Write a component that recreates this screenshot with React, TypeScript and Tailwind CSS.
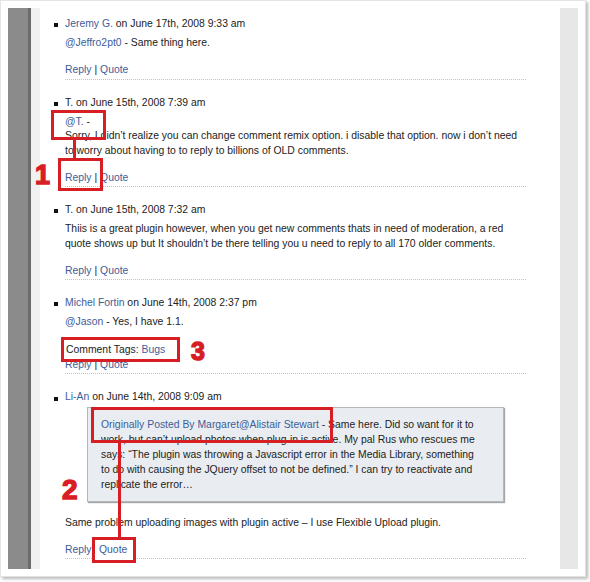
import React from "react";

const LINK = "text-[#3d5d99]";

function Bullet() {
  return <span className="block w-[4px] h-[4px] bg-[#111] mt-[2px] shrink-0" />;
}

function Header({ author, link, date }: { author: string; link?: boolean; date: string }) {
  return (
    <div className="flex items-center -ml-[11px] gap-[7px] whitespace-nowrap">
      <Bullet />
      <span>
        {link ? <span className={LINK}>{author}</span> : author} on {date}
      </span>
    </div>
  );
}

function ReplyRow({ className = "" }: { className?: string }) {
  return (
    <div className={"border-b border-dotted border-[#c2c2c2] pb-[1px] whitespace-nowrap " + className}>
      <span className={LINK}>Reply</span> | <span className={LINK}>Quote</span>
    </div>
  );
}

function RedBox({ className }: { className: string }) {
  return <div className={"absolute border-[3px] border-[#d81e25] " + className} />;
}

export default function App() {
  return (
    <div className="relative w-[590px] h-[582px] bg-white overflow-hidden font-['Liberation_Sans',Arial,sans-serif] text-[10.4px] leading-[14.5px] text-[#222]">
      <div className="w-[586px] h-[577px] bg-white border border-[#e4e4e4] p-[7px] shadow-[2px_2px_3px_rgba(0,0,0,0.28)]">
        <div className="flex h-full">
          <div className="w-[20px] bg-[#8b8b8b]" />
          <div className="w-[3px] bg-[#6c6c6c]" />
          <div className="w-[9px] bg-[#f1f1f1]" />
          <div className="flex-1 pl-[25px] pr-[34px] pt-[9px]">
            <ul>
              <li>
                <Header author="Jeremy G." link date="June 17th, 2008 9:33 am" />
                <div className="mt-[4.5px] whitespace-nowrap">
                  <span className={LINK}>@Jeffro2pt0</span> - Same thing here.
                </div>
                <ReplyRow className="mt-[12.5px]" />
              </li>
              <li className="mt-[16px]">
                <Header author="T." date="June 15th, 2008 7:39 am" />
                <div className="mt-[4.5px] whitespace-nowrap">
                  <span className={LINK}>@T.</span> -<br />
                  Sorry, I didn’t realize you can change comment remix option. i disable that option. now i don’t need
                  <br />
                  to worry about having to to reply to billions of OLD comments.
                </div>
                <ReplyRow className="mt-[12.5px]" />
              </li>
              <li className="mt-[16px]">
                <Header author="T." date="June 15th, 2008 7:32 am" />
                <div className="mt-[4.5px] whitespace-nowrap">
                  Thiis is a great plugin however, when you get new comments thats in need of moderation, a red
                  <br />
                  quote shows up but It shouldn’t be there telling you u need to reply to all 170 older comments.
                </div>
                <ReplyRow className="mt-[12.5px]" />
              </li>
              <li className="mt-[16px]">
                <Header author="Michel Fortin" link date="June 14th, 2008 2:37 pm" />
                <div className="mt-[4.5px] whitespace-nowrap">
                  <span className={LINK}>@Jason</span> - Yes, I have 1.1.
                </div>
                <ReplyRow className="mt-[28.25px]" />
              </li>
              <li className="mt-[16px]">
                <Header author="Li-An" link date="June 14th, 2008 9:09 am" />
                <div className="mt-[2.25px] mx-[22px] border border-[#b4b8bd] bg-[#e9edf1] pl-[13px] pt-[8.75px] pb-[9px] leading-[15px] whitespace-nowrap shadow-[1px_1px_1px_rgba(0,0,0,0.35)]">
                  <span className={LINK}>Originally Posted By Margaret@Alistair Stewart</span> - Same here. Did so want for it to
                  <br />
                  work, but can’t upload photos when plug-in is active. My pal Rus who rescues me
                  <br />
                  says: “The plugin was throwing a Javascript error in the Media Library, something
                  <br />
                  to do with causing the JQuery offset to not be defined.” I can try to reactivate and
                  <br />
                  replicate the error…
                </div>
                <div className="mt-[13.75px] whitespace-nowrap">
                  Same problem uploading images with plugin active – I use Flexible Upload plugin.
                </div>
                <ReplyRow className="mt-[12.5px]" />
              </li>
            </ul>
          </div>
          <div className="w-[18px] bg-[#e7e7e7]" />
        </div>
      </div>

      {/* Annotation 1 */}
      <RedBox className="left-[51px] top-[110px] w-[55px] h-[30px]" />
      <div className="absolute left-[73px] top-[140px] w-[3px] h-[18px] bg-[#d81e25]" />
      <RedBox className="left-[58px] top-[158px] w-[45px] h-[33px]" />
      <div className="absolute left-[35px] top-[162px] text-[27px] leading-[27px] font-bold text-[#d81e25] [-webkit-text-stroke:1.4px_#d81e25]">1</div>

      {/* Annotation 3 */}
      <div className="absolute left-[61px] top-[337px] w-[119px] h-[25px] border-[3px] border-[#d81e25] bg-white pl-[2px] leading-[19px] whitespace-nowrap">
        Comment Tags: <span className={LINK}>Bugs</span>
      </div>
      <div className="absolute left-[191px] top-[339px] text-[25px] leading-[25px] font-bold text-[#d81e25] [-webkit-text-stroke:1.4px_#d81e25]">3</div>

      {/* Annotation 2 */}
      <RedBox className="left-[91px] top-[407px] w-[242px] h-[36px]" />
      <div className="absolute left-[118px] top-[443px] w-[3px] h-[94px] bg-[#d81e25]" />
      <div className="absolute left-[92px] top-[537px] w-[44px] h-[26px] border-[3px] border-[#d81e25] bg-white pl-[4px] leading-[20px] whitespace-nowrap">
        <span className={LINK}>Quote</span>
      </div>
      <div className="absolute left-[62px] top-[476px] text-[28px] leading-[28px] font-bold text-[#d81e25] [-webkit-text-stroke:1.4px_#d81e25]">2</div>
    </div>
  );
}
